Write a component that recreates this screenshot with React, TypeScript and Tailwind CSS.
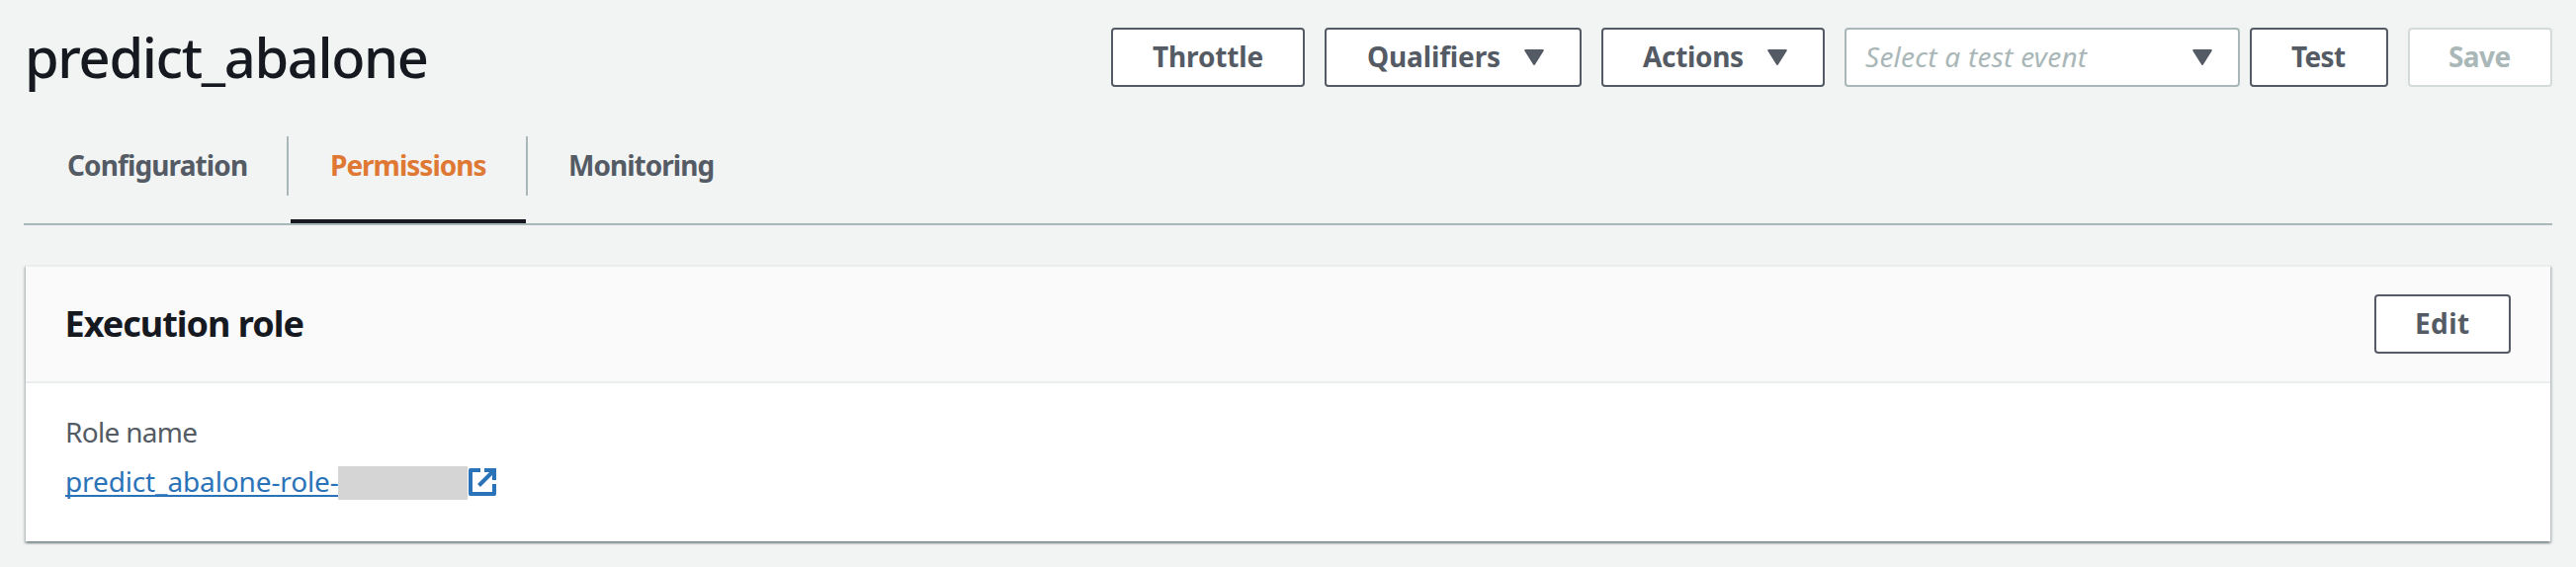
import type { ReactNode } from 'react'

function Caret() {
  return (
    <svg viewBox="0 0 20 16" className="mt-0.5 h-4 w-5 shrink-0" fill="#545b64" stroke="#545b64" strokeWidth="2" strokeLinejoin="round">
      <path d="M1.2 1H18.8L10 15Z" />
    </svg>
  )
}

function ExternalIcon() {
  return (
    <svg viewBox="0 0 28 28" className="h-7 w-7 shrink-0" fill="none" stroke="#2b73b9" strokeWidth="4">
      <path d="M12 2H2V26H26V16" strokeLinejoin="round" />
      <path d="M16 2H26V12" />
      <path d="M26 2L10.5 17.5" />
    </svg>
  )
}

function Button({ className, children }: { className: string; children: ReactNode }) {
  return (
    <button className={`flex h-[60px] shrink-0 items-center rounded-[4px] border-2 bg-white pb-0.5 text-[28px] leading-[40px] font-bold whitespace-nowrap ${className}`}>
      {children}
    </button>
  )
}

export default function App() {
  return (
    <div className="h-[574px] w-[2606px] overflow-hidden bg-[#f2f4f4] px-6 font-['Noto_Sans','Liberation_Sans',sans-serif] text-[#545b64]">
      <header className="flex h-[138px] items-start justify-between pt-7">
        <h1 className="-mt-0.5 ml-px text-[56px] leading-[62px] font-medium tracking-[-1.35px] text-[#16191f]">predict_abalone</h1>
        <div className="flex">
          <Button className="w-[196px] border-[#545b64] pl-10 tracking-[-0.14px]">Throttle</Button>
          <Button className="ml-5 w-[260px] justify-between border-[#545b64] pr-9 pl-[41px] tracking-[-0.14px]">
            Qualifiers
            <Caret />
          </Button>
          <Button className="ml-5 w-[226px] justify-between border-[#545b64] pr-9 pl-10 tracking-[-0.34px]">
            Actions
            <Caret />
          </Button>
          <div className="ml-5 flex h-[60px] w-[400px] items-center justify-between rounded-[4px] border-2 border-[#aab7b8] bg-white pr-[26px] pb-0.5 pl-[19px] text-[28px] leading-[40px] tracking-[0.25px] text-[#aab7b8] italic">
            Select a test event
            <Caret />
          </div>
          <Button className="ml-2.5 w-[140px] border-[#545b64] pl-10 tracking-[-0.66px]">Test</Button>
          <Button className="ml-5 w-[146px] border-[#d5dbdb] pl-[39px] tracking-[-0.6px] text-[#aab7b8]">Save</Button>
        </div>
      </header>

      <nav className="flex h-[90px] border-b-2 border-[#aab7b8] text-[28px] leading-[58px] font-bold">
        <div className="h-[60px] w-[268px] border-r-2 border-[#aab7b8] pl-11 tracking-[-0.88px]">Configuration</div>
        <div className="ml-0.5 h-[88px] w-[238px] border-b-4 border-[#16191f] pl-10 tracking-[-1px] text-[#df7833]">Permissions</div>
        <div className="h-[60px] border-l-2 border-[#aab7b8] pl-[41px] tracking-[-0.97px]">Monitoring</div>
      </nav>

      <section className="mx-0.5 mt-10 h-[280px] border-t-2 border-[#eaeded] bg-white shadow-[0_2px_2px_0_rgba(0,28,36,0.3),2px_2px_2px_0_rgba(0,28,36,0.15),-2px_2px_2px_0_rgba(0,28,36,0.15)]">
        <div className="flex h-[118px] items-center justify-between border-b-2 border-[#eaeded] bg-[#fafafa] pr-10 pl-[39.5px]">
          <h2 className="text-[36px] leading-[44px] font-bold tracking-[-1px] text-[#16191f]">Execution role</h2>
          <Button className="w-[138px] border-[#545b64] pl-[39px] tracking-[0.42px]">Edit</Button>
        </div>
        <div className="pt-[29px] pl-10 text-[28px]">
          <div className="leading-[40px] tracking-[-0.7px]">Role name</div>
          <div className="mt-2.5 flex h-10 items-start">
            <a className="w-[276px] leading-[40px] tracking-[-0.13px] whitespace-nowrap text-[#2b73b9] underline decoration-2 underline-offset-[3px] [text-decoration-skip-ink:none]">
              predict_abalone-role-
            </a>
            <span className="mt-[5px] h-[34px] w-[131px] bg-[#d5d5d5]" />
            <span className="mt-[7px] ml-px flex">
              <ExternalIcon />
            </span>
          </div>
        </div>
      </section>
    </div>
  )
}
